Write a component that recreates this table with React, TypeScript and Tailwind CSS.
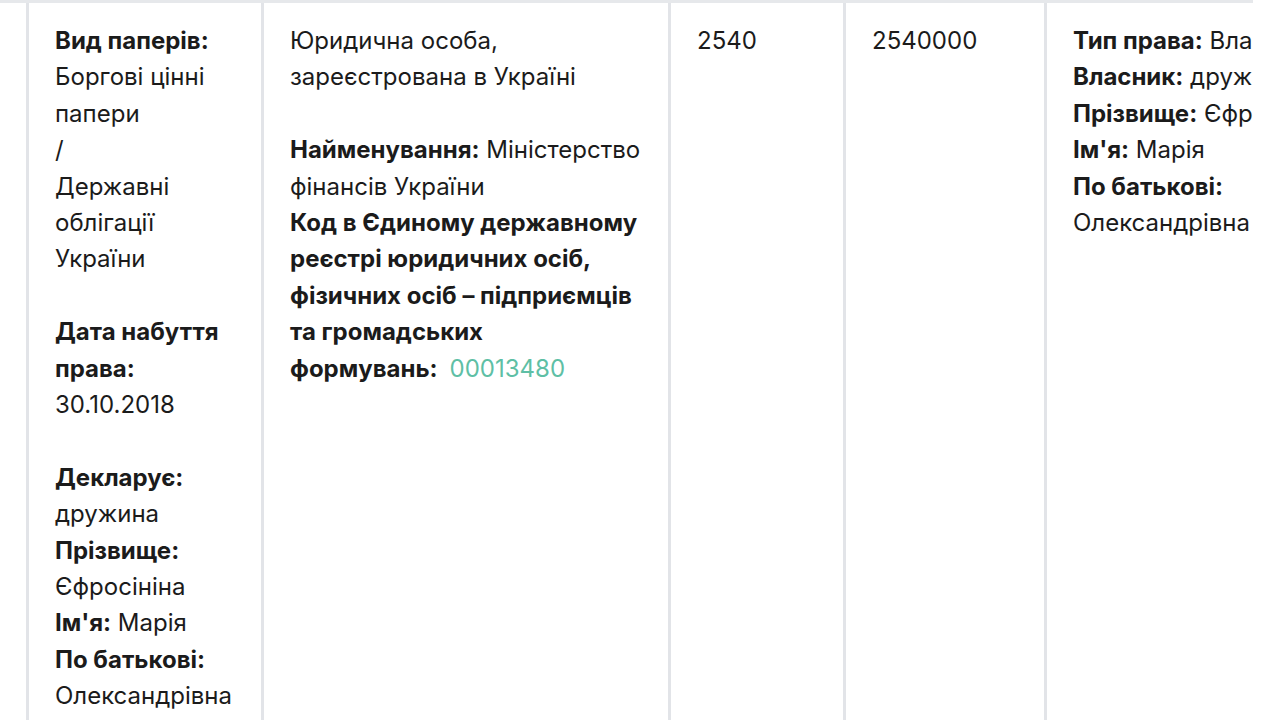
import React from "react";

const cell = "shrink-0 border-l-[3px] border-[#e2e4e8] pl-[26px] pr-[20px] pt-[20px]";

export default function App() {
  return (
    <div
      className="w-[1280px] h-[720px] overflow-hidden bg-white text-[#1b1b1b]"
      style={{ fontFamily: "Inter, 'Noto Sans', sans-serif" }}
    >
      <div className="w-[1253px] h-[720px] overflow-hidden border-t-[3px] border-[#e6e8eb]">
        <div className="flex h-full text-[24px] leading-[36.4px]">
          <div className="w-[26px] shrink-0" />
          <div className={`${cell} w-[235px]`}>
            <p>
              <b>Вид паперів:</b> Боргові цінні папери
              <br />/<br />
              Державні облігації України
            </p>
            <p className="mt-[36.4px]">
              <b>Дата набуття права:</b> 30.10.2018
            </p>
            <p className="mt-[36.4px]">
              <b>Декларує:</b> дружина
            </p>
            <p>
              <b>Прізвище:</b> Єфросініна
            </p>
            <p>
              <b>Ім'я:</b> Марія
            </p>
            <p>
              <b>По батькові:</b> Олександрівна
            </p>
          </div>
          <div className={`${cell} w-[407px]`}>
            <p>Юридична особа, зареєстрована в Україні</p>
            <p className="mt-[36.4px]">
              <b>Найменування:</b> Міністерство фінансів України
            </p>
            <p>
              <b>
                Код в Єдиному державному реєстрі юридичних осіб, фізичних осіб – підприємців та громадських формувань:
              </b>
              <span className="ml-[12px] text-[#5ebfa5]">00013480</span>
            </p>
          </div>
          <div className={`${cell} w-[175px]`}>
            <p>2540</p>
          </div>
          <div className={`${cell} w-[201px]`}>
            <p>2540000</p>
          </div>
          <div className={`${cell} w-[300px] pr-0`}>
            <p className="whitespace-nowrap">
              <b>Тип права:</b> Власність
            </p>
            <p className="whitespace-nowrap">
              <b>Власник:</b> дружина
            </p>
            <p className="whitespace-nowrap">
              <b>Прізвище:</b> Єфросініна
            </p>
            <p>
              <b>Ім'я:</b> Марія
            </p>
            <p>
              <b>По батькові:</b>
            </p>
            <p>Олександрівна</p>
          </div>
        </div>
      </div>
    </div>
  );
}
